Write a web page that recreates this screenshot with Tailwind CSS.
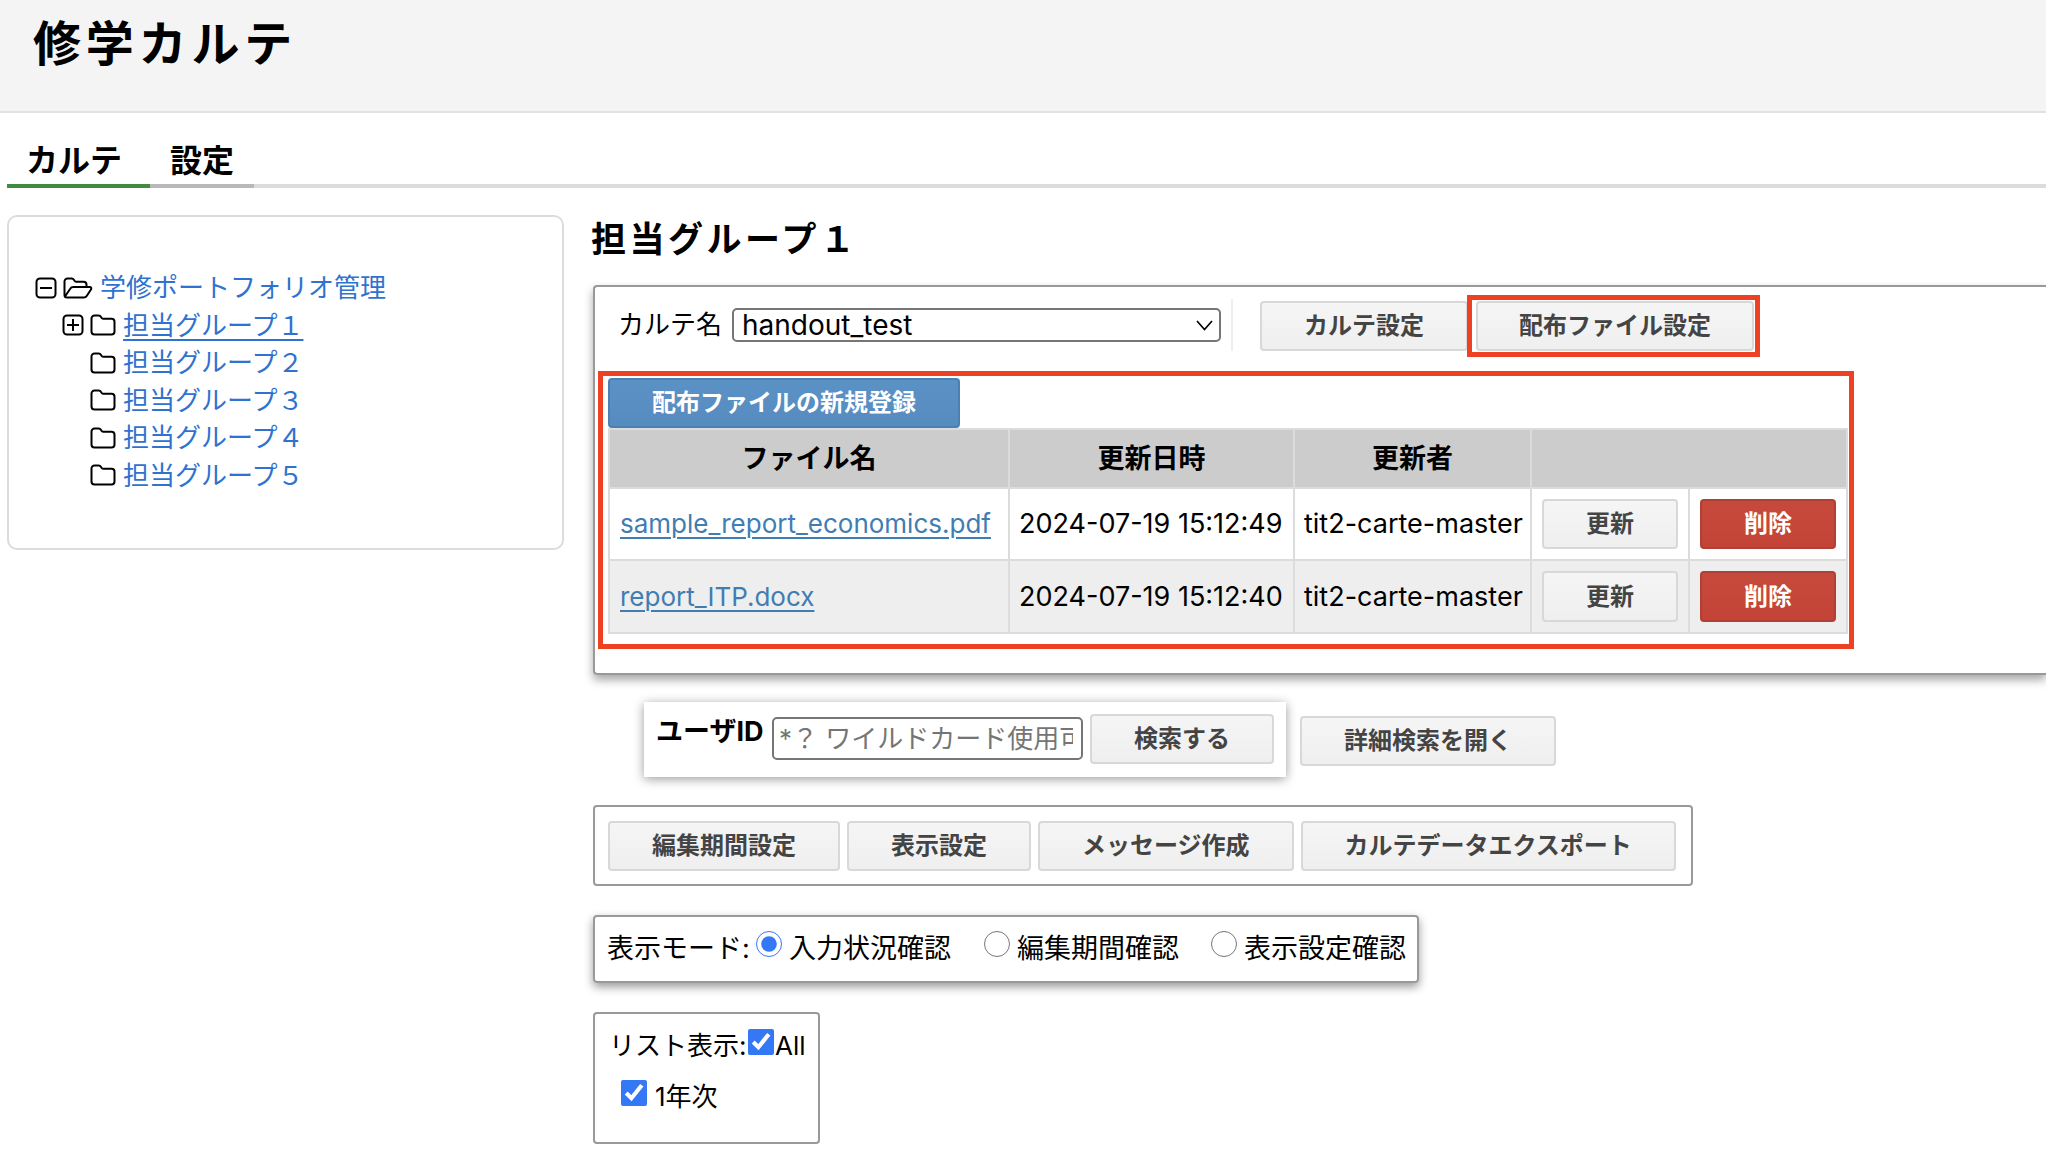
<!DOCTYPE html>
<html lang="ja">
<head>
<meta charset="utf-8">
<meta name="viewport" content="width=device-width, initial-scale=1">
<title>修学カルテ</title>
<script src="https://cdn.jsdelivr.net/npm/@tailwindcss/browser@4"></script>
</head>
<body class="min-h-screen overflow-x-hidden bg-white pb-[21px] font-['Inter','Noto_Sans_CJK_JP',sans-serif] text-[27px] leading-9 text-black">

<svg class="hidden" aria-hidden="true">
  <symbol id="folder" viewBox="0 0 26 22">
    <path d="M1.5 17.5V4.500a3 3 0 0 1 3-3h4.200a2.600 2.600 0 0 1 2.200 1.300l.8 1.200a1.600 1.600 0 0 0 1.300.7h8.500a3 3 0 0 1 3 3v9.800a3 3 0 0 1-3 3h-17a3 3 0 0 1-3-3z" fill="none" stroke="black" stroke-width="2"/>
  </symbol>
  <symbol id="folder-open" viewBox="0 0 30 22">
    <path d="M1.5 18.5v-14a3 3 0 0 1 3-3h4.200a2.600 2.600 0 0 1 2.200 1.300l.8 1.200a1.600 1.600 0 0 0 1.300.7h7.500a3 3 0 0 1 3 3v2.300M2 19.500l5.200-7.800a3.600 3.600 0 0 1 3-1.700h16.600a1.500 1.500 0 0 1 1.300 2.300l-4.400 6.700a3.400 3.400 0 0 1-2.900 1.500H4a2.500 2.500 0 0 1-2.500-2.500" fill="none" stroke="black" stroke-width="2" stroke-linejoin="round"/>
  </symbol>
  <symbol id="minus-box" viewBox="0 0 22 22">
    <rect x="1.5" y="1.5" width="19" height="19" rx="3.5" fill="none" stroke="black" stroke-width="2"/>
    <path d="M5 11h12" stroke="black" stroke-width="2"/>
  </symbol>
  <symbol id="plus-box" viewBox="0 0 22 22">
    <rect x="1.5" y="1.5" width="19" height="19" rx="3.5" fill="none" stroke="black" stroke-width="2"/>
    <path d="M5 11h12M11 5v12" stroke="black" stroke-width="2"/>
  </symbol>
</svg>

<header class="h-[113px] border-b-2 border-[#e2e2e2] bg-[#f4f4f4] px-[33px] pt-4">
  <h1 class="text-5xl leading-[56px] font-bold tracking-widest">修学カルテ</h1>
</header>

<nav class="ml-[7px] pt-6">
  <ul class="flex border-b-4 border-[#dcdcdc] text-[32px] leading-[48px] font-bold">
    <li class="-mb-1 border-b-4 border-[#3f8c3f] pr-7 pl-[19px]"><a href="#carte" class="block h-[47px]">カルテ</a></li>
    <li class="-mb-1 border-b-4 border-[#b8b8b8] px-5"><a href="#settings" class="block h-[47px]">設定</a></li>
  </ul>
</nav>

<div class="flex items-start gap-[29px] pt-[27px] pl-[7px]">

  <aside class="h-[335px] w-[557px] shrink-0 rounded-[10px] border-2 border-[#dcdcdc] pt-[52px] pl-[26px] text-[26px] leading-[37px] text-[#2f72cf]">
    <ul>
      <li>
        <div class="flex h-[37px] items-center">
          <button type="button" aria-label="閉じる" class="mr-1.5"><svg class="size-[22px]"><use href="#minus-box"/></svg></button>
          <svg class="mr-[7px] h-[22px] w-[30px]" aria-hidden="true"><use href="#folder-open"/></svg>
          <a href="#root">学修ポートフォリオ管理</a>
        </div>
        <ul class="pl-[27px]">
          <li class="flex h-[38px] items-center">
            <button type="button" aria-label="開く" class="mr-1.5"><svg class="size-[22px]"><use href="#plus-box"/></svg></button>
            <svg class="mr-[7px] h-[22px] w-[26px]" aria-hidden="true"><use href="#folder"/></svg>
            <a href="#g1" class="underline decoration-2 underline-offset-4">担当グループ１</a>
          </li>
          <li class="flex h-[37px] items-center pl-7">
            <svg class="mr-[7px] h-[22px] w-[26px]" aria-hidden="true"><use href="#folder"/></svg>
            <a href="#g2">担当グループ２</a>
          </li>
          <li class="flex h-[38px] items-center pl-7">
            <svg class="mr-[7px] h-[22px] w-[26px]" aria-hidden="true"><use href="#folder"/></svg>
            <a href="#g3">担当グループ３</a>
          </li>
          <li class="flex h-[37px] items-center pl-7">
            <svg class="mr-[7px] h-[22px] w-[26px]" aria-hidden="true"><use href="#folder"/></svg>
            <a href="#g4">担当グループ４</a>
          </li>
          <li class="flex h-[38px] items-center pl-7">
            <svg class="mr-[7px] h-[22px] w-[26px]" aria-hidden="true"><use href="#folder"/></svg>
            <a href="#g5">担当グループ５</a>
          </li>
        </ul>
      </li>
    </ul>
  </aside>

  <main class="min-w-0 flex-1">
    <h2 class="-ml-0.5 text-[35px] leading-[48px] font-bold tracking-widest">担当グループ１</h2>

    <section class="mt-[22px] rounded-l-[4px] border-2 border-r-0 border-[#999] pt-3.5 pb-6 shadow-[0_5px_10px_rgba(0,0,0,0.35)]">
      <div class="flex items-start pl-[23px]">
        <label for="carte" class="mt-1.5 w-[114px] text-[26px]">カルテ名</label>
        <div class="relative mt-[7px] w-[489px]">
          <select id="carte" class="block h-[34px] w-full appearance-none rounded-[5px] border-2 border-[#767676] bg-white pl-2 text-[28px] leading-[30px]">
            <option>handout_test</option>
          </select>
          <svg class="pointer-events-none absolute top-3 right-2 h-[11px] w-[17px]" viewBox="0 0 17 11" fill="none" stroke="black" stroke-width="1.7" aria-hidden="true"><path d="M1 1l7.500 8.500L16 1"/></svg>
        </div>
        <div class="mr-[27px] ml-[10px] -mt-0.5 h-[52px] w-0.5 bg-[#eee]"></div>
        <button type="button" class="h-[50px] rounded-[4px] border-2 border-[#d8d8d8] bg-linear-to-b from-[#f5f5f5] to-[#efefef] px-[42px] text-2xl leading-[46px] font-bold text-[#444]">カルテ設定</button>
        <div class="relative ml-2">
          <button type="button" class="h-[50px] rounded-[4px] border-2 border-[#d8d8d8] bg-linear-to-b from-[#f5f5f5] to-[#efefef] px-[41px] text-2xl leading-[46px] font-bold text-[#444]">配布ファイル設定</button>
          <span class="pointer-events-none absolute -top-1.5 -right-1.5 -bottom-1.5 -left-[9px] border-5 border-[#ee4023]"></span>
        </div>
      </div>

      <div class="mt-5 ml-[3px] w-fit border-5 border-[#ee4023] pt-0.5 pr-px pb-[10px] pl-[5px]">
        <button type="button" class="block h-[50px] rounded-[4px] border-2 border-[#4a80b2] bg-linear-to-b from-[#5b92c6] to-[#568bbf] px-[42px] text-2xl leading-[46px] font-bold text-white">配布ファイルの新規登録</button>
        <table class="w-[1240px] table-fixed border-collapse whitespace-nowrap">
          <colgroup><col class="w-[400px]"><col class="w-[285px]"><col class="w-[237px]"><col class="w-[158px]"><col class="w-[158px]"></colgroup>
          <thead>
            <tr class="h-[59px] bg-[#ccc]">
              <th class="border-2 border-[#dcdcdc] font-bold">ファイル名</th>
              <th class="border-2 border-[#dcdcdc] font-bold">更新日時</th>
              <th class="border-2 border-[#dcdcdc] font-bold">更新者</th>
              <th class="border-2 border-[#dcdcdc]" colspan="2"></th>
            </tr>
          </thead>
          <tbody>
            <tr>
              <td class="border-2 border-[#dcdcdc] px-[10px] text-[26px]"><a href="#f1" class="text-[#3f7db3] underline decoration-2 underline-offset-4">sample_report_economics.pdf</a></td>
              <td class="border-2 border-[#dcdcdc] px-[9px]">2024-07-19 15:12:49</td>
              <td class="border-2 border-[#dcdcdc] px-[9px]">tit2-carte-master</td>
              <td class="border-2 border-[#dcdcdc] px-[10px] py-[10px]"><button type="button" class="block h-[50px] w-full rounded-[4px] border-2 border-[#d8d8d8] bg-linear-to-b from-[#f5f5f5] to-[#efefef] text-2xl leading-[46px] font-bold text-[#444]">更新</button></td>
              <td class="border-2 border-[#dcdcdc] px-[10px] py-[10px]"><button type="button" class="block h-[50px] w-full rounded-[4px] border-2 border-[#b04035] bg-linear-to-b from-[#c64a3c] to-[#c34436] text-2xl leading-[46px] font-bold text-white">削除</button></td>
            </tr>
            <tr class="bg-[#eee]">
              <td class="border-2 border-[#dcdcdc] px-[10px] text-[26px]"><a href="#f2" class="text-[#3f7db3] underline decoration-2 underline-offset-4">report_ITP.docx</a></td>
              <td class="border-2 border-[#dcdcdc] px-[9px]">2024-07-19 15:12:40</td>
              <td class="border-2 border-[#dcdcdc] px-[9px]">tit2-carte-master</td>
              <td class="border-2 border-[#dcdcdc] px-[10px] py-[10px]"><button type="button" class="block h-[51px] w-full rounded-[4px] border-2 border-[#d8d8d8] bg-linear-to-b from-[#f5f5f5] to-[#efefef] text-2xl leading-[46px] font-bold text-[#444]">更新</button></td>
              <td class="border-2 border-[#dcdcdc] px-[10px] py-[10px]"><button type="button" class="block h-[51px] w-full rounded-[4px] border-2 border-[#b04035] bg-linear-to-b from-[#c64a3c] to-[#c34436] text-2xl leading-[46px] font-bold text-white">削除</button></td>
            </tr>
          </tbody>
        </table>
      </div>
    </section>

    <form class="mt-[27px] ml-[51px] flex items-start">
      <div class="flex items-start bg-white pt-3 pr-3 pb-[13px] pl-3 shadow-[0_2px_10px_rgba(0,0,0,0.4)]">
        <label for="uid" class="w-[116px] font-bold">ユーザID</label>
        <input id="uid" type="text" placeholder="*？ ワイルドカード使用可能" class="mt-[3px] mr-[7px] h-[43px] w-[311px] rounded-[5px] border-2 border-[#767676] pr-2 pl-[5px] text-[26px] placeholder:text-[#757575]">
        <button type="button" class="h-[50px] rounded-[4px] border-2 border-[#d8d8d8] bg-linear-to-b from-[#f5f5f5] to-[#efefef] px-[42px] text-2xl leading-[46px] font-bold text-[#444]">検索する</button>
      </div>
      <button type="button" class="mt-3.5 ml-3.5 h-[50px] rounded-[4px] border-2 border-[#d8d8d8] bg-linear-to-b from-[#f5f5f5] to-[#efefef] px-[42px] text-2xl leading-[46px] font-bold text-[#444]">詳細検索を開く</button>
    </form>

    <div class="mt-7 flex w-fit gap-[7px] rounded-[4px] border-2 border-[#999] pt-3.5 pr-[15px] pb-[13px] pl-[13px]">
      <button type="button" class="h-[50px] rounded-[4px] border-2 border-[#d8d8d8] bg-linear-to-b from-[#f5f5f5] to-[#efefef] px-[42px] text-2xl leading-[46px] font-bold text-[#444]">編集期間設定</button>
      <button type="button" class="h-[50px] rounded-[4px] border-2 border-[#d8d8d8] bg-linear-to-b from-[#f5f5f5] to-[#efefef] px-[42px] text-2xl leading-[46px] font-bold text-[#444]">表示設定</button>
      <button type="button" class="h-[50px] rounded-[4px] border-2 border-[#d8d8d8] bg-linear-to-b from-[#f5f5f5] to-[#efefef] px-[42px] text-2xl leading-[46px] font-bold text-[#444]">メッセージ作成</button>
      <button type="button" class="h-[50px] rounded-[4px] border-2 border-[#d8d8d8] bg-linear-to-b from-[#f5f5f5] to-[#efefef] px-[42px] text-2xl leading-[46px] font-bold text-[#444]">カルテデータエクスポート</button>
    </div>

    <fieldset class="mt-[29px] flex h-[68px] w-fit items-start rounded-[4px] border-2 border-[#999] pt-3.5 pr-[11px] pl-3 shadow-[0_4px_10px_rgba(0,0,0,0.4)]">
      <span class="w-[149px]">表示モード:</span>
      <label class="flex gap-[7px]"><input type="radio" name="mode" checked class="size-[26px] accent-[#3478f6]">入力状況確認</label>
      <label class="ml-[33px] flex gap-[7px]"><input type="radio" name="mode" class="size-[26px] accent-[#3478f6]">編集期間確認</label>
      <label class="ml-8 flex gap-[7px]"><input type="radio" name="mode" class="size-[26px] accent-[#3478f6]">表示設定確認</label>
    </fieldset>

    <div class="mt-[29px] h-[132px] w-[227px] rounded-[4px] border-2 border-[#999] pt-3.5 pl-3.5 text-[26px] whitespace-nowrap">
      <div class="flex">
        <span class="w-[139px]">リスト表示:</span>
        <label class="flex gap-px"><input type="checkbox" checked class="mt-px size-[26px] accent-[#3478f6]">All</label>
      </div>
      <label class="mt-[15px] ml-3 flex gap-2"><input type="checkbox" checked class="mt-px size-[26px] accent-[#3478f6]">1年次</label>
    </div>
  </main>
</div>
</body>
</html>
